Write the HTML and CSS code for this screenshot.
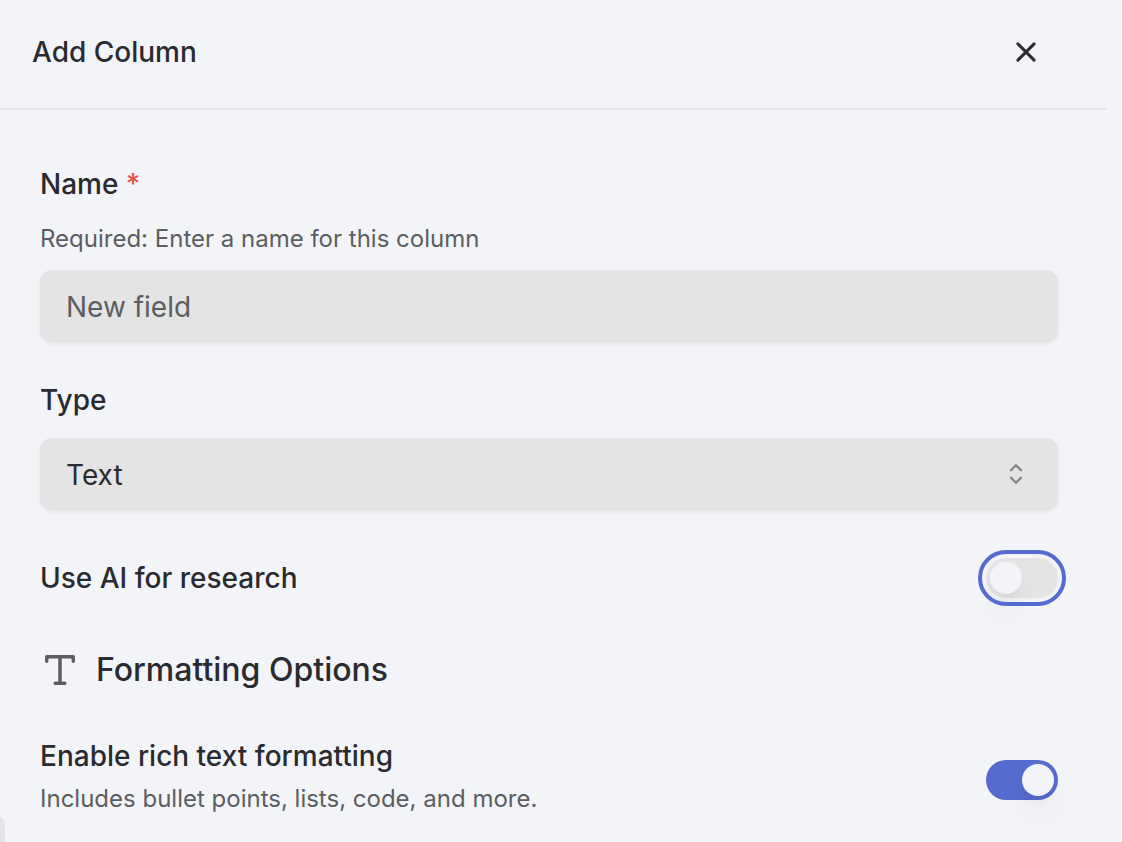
FILE: index.html
```html
<!DOCTYPE html>
<html lang="en">

<head>
    <meta charset="utf-8">
    <title>Add Column</title>
    <link rel="stylesheet" href="styles.css">
</head>

<body>
    <div class="panel">
        <header class="panel-header">
            <h1 class="panel-title">Add Column</h1>
            <button class="close" type="button" aria-label="Close">
                <svg width="24" height="24" viewBox="0 0 24 24" fill="none" stroke="currentColor" stroke-width="3" stroke-linecap="round">
                    <path d="M3.9 3.9 20.1 20.1M20.1 3.9 3.9 20.1" />
                </svg>
            </button>
        </header>

        <form class="panel-body">
            <div class="field">
                <label class="label" for="name">Name <span class="required">*</span></label>
                <p class="help" id="name-help">Required: Enter a name for this column</p>
                <input class="control" id="name" type="text" placeholder="New field" aria-describedby="name-help">
            </div>

            <div class="field">
                <label class="label" for="type">Type</label>
                <div class="select">
                    <select class="control" id="type">
                        <option>Text</option>
                    </select>
                    <svg class="select-icon" width="14" height="20" viewBox="0 0 14 20" fill="none" stroke="currentColor" stroke-width="2.3" stroke-linecap="round" stroke-linejoin="round">
                        <path d="M2 6.3 7 1.3 12 6.3M2 13.7 7 18.7 12 13.7" />
                    </svg>
                </div>
            </div>

            <div class="row">
                <label class="label" for="ai">Use AI for research</label>
                <input class="toggle focused" id="ai" type="checkbox" role="switch">
            </div>

            <h2 class="section-title">
                <svg width="40" height="40" viewBox="0 0 40 40" fill="none" stroke="currentColor" stroke-width="3.5" stroke-linecap="round" stroke-linejoin="round">
                    <path d="M6.75 11.2V6.75H33.25V11.2M20 6.75V33.25M15.2 33.25H24.8" />
                </svg>
                Formatting Options
            </h2>

            <div class="row">
                <div class="row-text">
                    <label class="label" for="rich">Enable rich text formatting</label>
                    <p class="help" id="rich-help">Includes bullet points, lists, code, and more.</p>
                </div>
                <input class="toggle" id="rich" type="checkbox" role="switch" aria-describedby="rich-help" checked>
            </div>
        </form>
    </div>
    <div class="corner"></div>
</body>

</html>
```
FILE: styles.css
```css
* {
    box-sizing: border-box;
}

body {
    margin: 0;
    background-color: #f3f4f8;
    color: #2a2b30;
    font-family: Inter, "Liberation Sans", sans-serif;
    font-size: 28px;
}

h1,
h2,
p {
    margin: 0;
}

.panel {
    margin-right: 16px;
}

.panel-header {
    display: flex;
    align-items: center;
    justify-content: space-between;
    padding: 32px 60px 36px 32px;
    border-bottom: 2px solid #e3e4e6;
}

.panel-title {
    font-size: 28px;
    font-weight: 500;
    line-height: 40px;
}

.close {
    display: flex;
    align-items: center;
    justify-content: center;
    width: 40px;
    height: 40px;
    padding: 0;
    border: none;
    background: none;
    color: inherit;
    cursor: pointer;
}

.panel-body {
    padding: 54px 48px 16px 40px;
}

.field {
    margin-bottom: 38px;
}

.label {
    display: block;
    font-weight: 500;
    line-height: 40px;
}

.field .label {
    margin-bottom: 18px;
}

.required {
    color: #e5534b;
}

.help {
    color: #5c5d62;
    font-size: 24px;
    line-height: 34px;
}

.field .help {
    margin-bottom: 14px;
}

.control {
    display: block;
    width: 100%;
    height: 72px;
    padding: 2px 26px 0;
    border: none;
    border-radius: 12px;
    background-color: #e4e4e4;
    box-shadow: 0 2px 4px rgba(0, 0, 0, 0.06);
    color: inherit;
    font: inherit;
    appearance: none;
}

.control::placeholder {
    color: #5c5d62;
    opacity: 1;
}

.select {
    position: relative;
}

.select-icon {
    position: absolute;
    top: 26px;
    right: 35px;
    color: #858585;
    pointer-events: none;
}

.row {
    display: flex;
    align-items: center;
    justify-content: space-between;
}

.field + .row {
    margin-top: 48px;
}

.row-text {
    padding-bottom: 8px;
}

.row-text .help {
    margin-top: 6px;
}

.toggle {
    flex: none;
    width: 72px;
    height: 40px;
    margin: 0;
    padding: 4px;
    border-radius: 20px;
    background-color: #e4e4e4;
    appearance: none;
    cursor: pointer;
}

.toggle::before {
    content: "";
    display: block;
    width: 32px;
    height: 32px;
    border-radius: 50%;
    background-color: #f3f4f8;
    box-shadow: 0 20px 30px rgba(0, 0, 0, 0.04), 0 8px 12px -4px rgba(0, 0, 0, 0.05);
}

.toggle:checked {
    background-color: #566bcf;
}

.toggle:checked::before {
    margin-left: auto;
}

.toggle.focused {
    outline: 4px solid #566bcf;
    outline-offset: 4px;
}

.section-title {
    display: flex;
    align-items: center;
    gap: 16px;
    margin: 52px 0 46px;
    font-size: 32px;
    font-weight: 500;
    line-height: 40px;
}

.section-title svg {
    color: #5c5d62;
}

/* edge of the button behind the panel */
.corner {
    position: fixed;
    bottom: 0;
    left: 0;
    width: 5px;
    height: 25px;
    border-top-right-radius: 5px 10px;
    background-color: #e4e4e4;
}
```
